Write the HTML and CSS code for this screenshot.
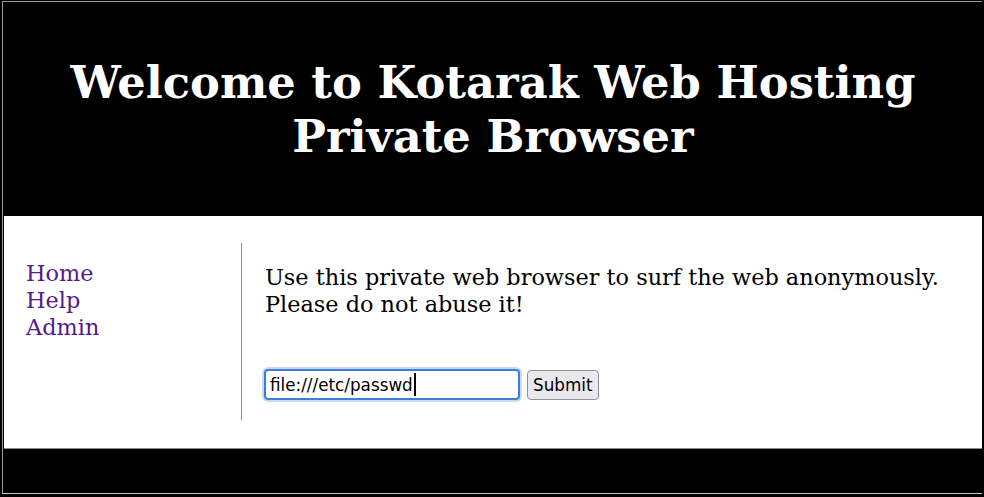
FILE: index.html
```html
<!DOCTYPE html>
<html>
<head>
<meta charset="utf-8">
<title>Kotarak Web Hosting</title>
<link rel="stylesheet" href="styles.css">
</head>
<body>
<div class="frame">
  <div class="inner">
    <header class="header">
      <h1 class="title">Welcome to Kotarak Web Hosting<br>Private Browser</h1>
    </header>
    <main class="main">
      <nav class="nav">
        <a href="#" class="nav-link">Home</a>
        <a href="#" class="nav-link">Help</a>
        <a href="#" class="nav-link">Admin</a>
      </nav>
      <section class="content">
        <p class="intro">Use this private web browser to surf the web anonymously.<br>Please do not abuse it!</p>
        <form class="form">
          <div class="field"><span class="field-text">file:///etc/passwd</span><span class="caret"></span></div>
          <button type="button" class="submit">Submit</button>
        </form>
      </section>
    </main>
    <footer class="footer"></footer>
  </div>
</div>
</body>
</html>
```
FILE: styles.css
```css
html, body {
  margin: 0;
  padding: 0;
  background: #000;
}
body {
  width: 984px;
  height: 497px;
  overflow: hidden;
  font-family: "DejaVu Serif", serif;
}
.frame {
  margin: 1px 2px 0 2px;
  border-top: 1px solid #9c9c9c;
  border-left: 1px solid #9c9c9c;
  border-bottom: 1px solid #c8c8c8;
  height: 493px;
  box-sizing: border-box;
  padding: 1px 0 0 1px;
  display: flex;
  flex-direction: column;
}
.inner {
  display: flex;
  flex-direction: column;
  width: 978px;
  border-bottom: 1px solid #8a8a8a;
}
.header {
  background: #000;
  height: 213px;
  display: flex;
  align-items: center;
  justify-content: center;
}
.title {
  margin: 0;
  color: #fff;
  font-weight: bold;
  font-size: 44.8px;
  line-height: 54px;
  text-align: center;
  padding-top: 0;
}
.main {
  background: #fff;
  height: 232px;
  display: flex;
  align-items: flex-start;
  padding-top: 27px;
  box-sizing: border-box;
}
.nav {
  width: 238px;
  height: 177px;
  border-right: 1px solid #8c8c8c;
  display: flex;
  flex-direction: column;
  padding: 17px 0 0 22px;
  box-sizing: border-box;
}
.nav-link {
  color: #551a8b;
  text-decoration: none;
  font-size: 22.4px;
  line-height: 27px;
}
.content {
  padding: 21px 0 0 23px;
}
.intro {
  margin: 0;
  font-size: 22.4px;
  line-height: 27px;
  color: #000;
}
.form {
  margin-top: 51px;
  margin-left: -1px;
  display: flex;
  align-items: center;
  gap: 7px;
}
.field {
  width: 256px;
  height: 31px;
  box-sizing: border-box;
  border: 2px solid #3d7fd8;
  border-radius: 4px;
  box-shadow: 0 0 0 2px #c6dcf5;
  display: flex;
  align-items: center;
  padding-left: 4px;
  font-family: "DejaVu Sans", sans-serif;
  font-size: 16.8px;
  color: #000;
}
.caret {
  display: inline-block;
  width: 2px;
  height: 23px;
  background: #000;
  margin-left: 1px;
}
.submit {
  height: 30px;
  padding: 0 5px;
  border: 1px solid #8f8f9d;
  border-radius: 4px;
  background: #e9e9ed;
  font-family: "DejaVu Sans", sans-serif;
  font-size: 16.8px;
  color: #000;
}
```
